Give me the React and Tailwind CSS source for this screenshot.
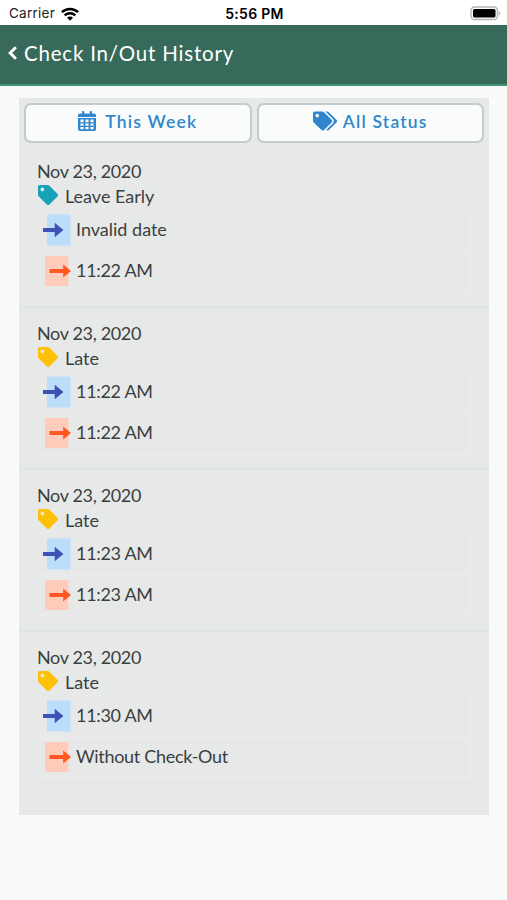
import React from 'react';
import { FaTag, FaTags } from 'react-icons/fa';

const entries = [
  { id: 1, date: 'Nov 23, 2020', status: 'Leave Early', color: 'text-[#17a2b8]', checkIn: 'Invalid date', checkOut: '11:22 AM' },
  { id: 2, date: 'Nov 23, 2020', status: 'Late', color: 'text-[#ffc107]', checkIn: '11:22 AM', checkOut: '11:22 AM' },
  { id: 3, date: 'Nov 23, 2020', status: 'Late', color: 'text-[#ffc107]', checkIn: '11:23 AM', checkOut: '11:23 AM' },
  { id: 4, date: 'Nov 23, 2020', status: 'Late', color: 'text-[#ffc107]', checkIn: '11:30 AM', checkOut: 'Without Check-Out' },
];

const WifiIcon = () => (
  <svg width="18" height="14" viewBox="0 0 18 14" fill="none" stroke="#000" strokeWidth="2.5">
    <path d="M0.9 5.1C5.5 0.8 12.5 0.8 17.1 5.1" />
    <path d="M3.7 8.3C6.7 5.5 11.3 5.5 14.3 8.3" />
    <path d="M9 13.7L6 10.7C7.7 9.2 10.3 9.2 12 10.7Z" fill="#000" stroke="none" />
  </svg>
);

const BatteryIcon = () => (
  <svg width="31" height="15" viewBox="0 0 31 15">
    <rect x="1" y="1" width="26.5" height="12.5" rx="3.6" fill="#fff" stroke="#b5b5b5" strokeWidth="1.4" />
    <rect x="3" y="3" width="22.5" height="8.5" rx="1.6" fill="#000" />
    <path d="M28.6 5.2C30.9 6 30.9 8.6 28.6 9.4Z" fill="#b5b5b5" />
  </svg>
);

const BackIcon = () => (
  <svg width="11" height="14" viewBox="0 0 11 14" fill="none" stroke="#fff" strokeWidth="2.9">
    <path d="M8.9 1.3L3.1 7L8.9 12.7" />
  </svg>
);

const CalendarIcon = () => (
  <svg width="18" height="20" viewBox="0 0 18 20" fill="currentColor" className="mr-[9px] mb-[3px]">
    <path d="M4 0.8Q4 0 4.8 0H5.4Q6.2 0 6.2 0.8V2.4H11.8V0.8Q11.8 0 12.6 0H13.2Q14 0 14 0.8V2.4H16.2Q18 2.4 18 4.2V6H0V4.2Q0 2.4 1.8 2.4H4Z" />
    <path
      fillRule="evenodd"
      d="M0 7H18V18.2Q18 20 16.2 20H1.8Q0 20 0 18.2ZM2.4 8.6V11.2H5.6V8.6ZM7.4 8.6V11.2H10.6V8.6ZM12.4 8.6V11.2H15.6V8.6ZM2.4 12.4V14.8H5.6V12.4ZM7.4 12.4V14.8H10.6V12.4ZM12.4 12.4V14.8H15.6V12.4ZM2.4 16V18.3H5.6V16ZM7.4 16V18.3H10.6V16ZM12.4 16V18.3H15.6V16Z"
    />
  </svg>
);

const CheckInIcon = () => (
  <svg width="30" height="32" viewBox="0 0 30 32" className="shrink-0">
    <rect x="5" y="0.5" width="23.5" height="31" fill="#bbdefb" />
    <path d="M1 14H12.7V8.8L21.4 16L12.7 23.2V18H1Z" fill="#3f51b5" />
  </svg>
);

const CheckOutIcon = () => (
  <svg width="30" height="32" viewBox="0 0 30 32" className="shrink-0">
    <rect x="3" y="1" width="23.5" height="30" fill="#ffccbc" />
    <path d="M7.5 14H21.2V9.5L29 16L21.2 22.5V18H7.5Z" fill="#ff5722" />
  </svg>
);

const StatusBar = () => (
  <div className="grid grid-cols-3 items-center h-[25px] pt-0.5 pl-[9px] pr-[6px] bg-white font-['Inter',sans-serif] text-black">
    <div className="flex items-center gap-1.5 text-[13.5px] leading-none tracking-[0.25px] text-[#222]">
      <span>Carrier</span>
      <WifiIcon />
    </div>
    <div className="text-center text-[14px] leading-none font-semibold tracking-[0.3px] pr-px">5:56 PM</div>
    <div className="flex justify-end">
      <BatteryIcon />
    </div>
  </div>
);

const FilterButton = ({ icon, label }) => (
  <button className="flex-1 flex items-center justify-center h-10 pb-px rounded-[7px] border-2 border-[#c3cbcc] bg-[#fafcfc] text-[#2f86cc] text-[17.5px] font-semibold tracking-[1.2px]">
    {icon}
    <span>{label}</span>
  </button>
);

const TimeRow = ({ icon, text }) => (
  <div className="flex items-center h-[41.5px] pl-[5px] gap-[4px] border-b-4 border-r-4 border-[#e8eaeb]">
    {icon}
    <span className={text === 'Invalid date' ? 'pb-px' : 'pb-px tracking-[-0.3px]'}>{text}</span>
  </div>
);

const Entry = ({ entry }) => (
  <div className="h-[162px] pt-[13px] pl-[18px] pr-[17px] border-b-2 border-[#e1e4e4] last:border-b-0">
    <div className="h-[25px] leading-[25px] tracking-[-0.35px]">{entry.date}</div>
    <div className="flex items-center gap-[7px] h-[25px] mb-0.5">
      <FaTag className={`text-[20px] mb-[3px] ml-px ${entry.color}`} />
      <span className="pb-px">{entry.status}</span>
    </div>
    <TimeRow icon={<CheckInIcon />} text={entry.checkIn} />
    <TimeRow icon={<CheckOutIcon />} text={entry.checkOut} />
  </div>
);

const App = () => {
  return (
    <div className="w-[507px] h-[900px] overflow-hidden bg-[#f9fafa] font-['Lato',sans-serif]">
      <StatusBar />
      <header className="flex items-center gap-[6px] h-[61px] pl-[7px] pb-[3px] bg-[#376a5a] border-b-2 border-[#3f9573] text-white">
        <BackIcon />
        <h1 className="text-[20.5px] tracking-[0.8px]">Check In/Out History</h1>
      </header>

      <main className="mt-3 ml-[19px] w-[470px] h-[717px] bg-[#e6e9e8] text-[#3b3f3f] text-[18px]">
        <div className="flex gap-[5px] px-[5px] pt-[5px] pb-[3px]">
          <FilterButton icon={<CalendarIcon />} label="This Week" />
          <FilterButton icon={<FaTags className="text-[20px] w-6 mr-[6px] mb-[3px]" />} label="All Status" />
        </div>
        <div>
          {entries.map((entry) => (
            <Entry key={entry.id} entry={entry} />
          ))}
        </div>
      </main>
    </div>
  );
};

export default App;
